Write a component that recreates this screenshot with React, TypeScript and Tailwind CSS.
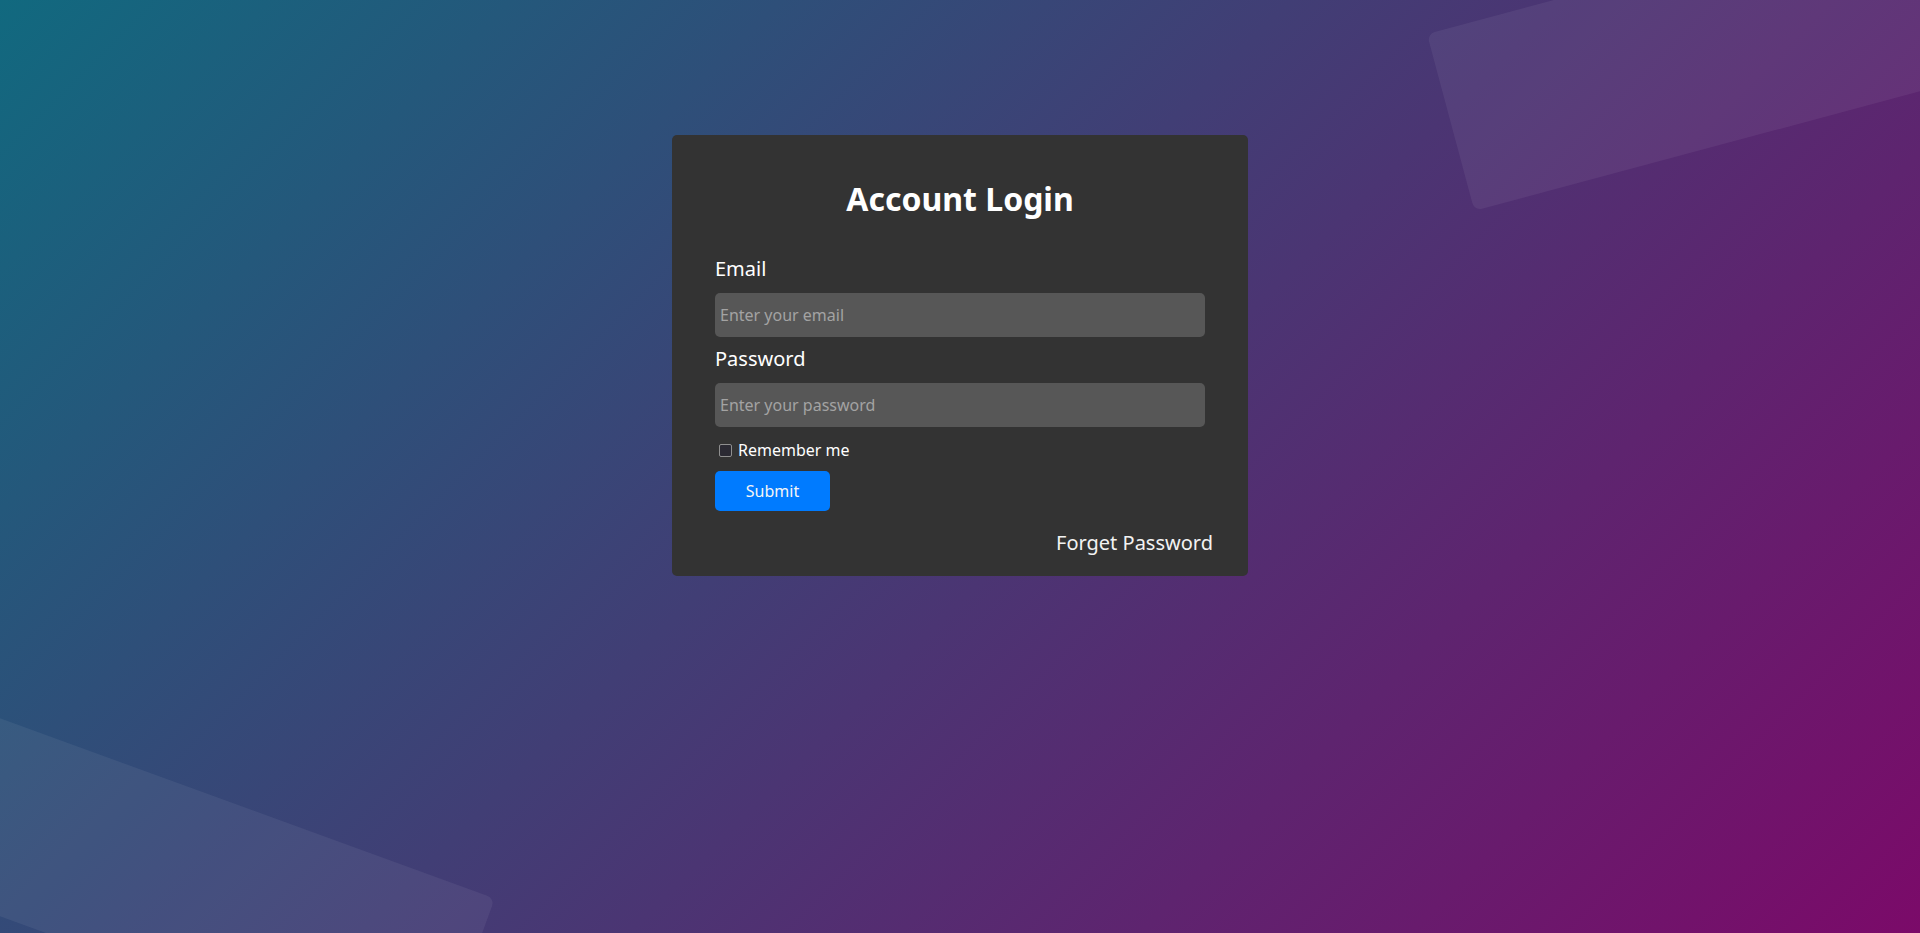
import { useState } from "react";

export default function App() {
  const [remember, setRemember] = useState(false);

  return (
    <div className="relative h-[933px] w-full overflow-hidden bg-[linear-gradient(135deg,#11697f,#7b0a69)] font-['Noto_Sans',sans-serif]">
      {/* decorative tilted panels */}
      <div className="pointer-events-none absolute left-[1427px] top-[34px] h-[183px] w-[700px] origin-top-left -rotate-[15deg] rounded-[8px] bg-white/[0.06]" />
      <div className="pointer-events-none absolute left-[-163px] top-[659px] h-[186px] w-[700px] origin-top-left rotate-[20deg] rounded-[8px] bg-white/[0.06]" />

      <div className="relative mx-auto mt-[135px] w-[576px] rounded-[5px] bg-[#333333] px-[43px] pb-[20px] pt-[42px]">
        <h1 className="text-center text-[32px] font-bold leading-[44px] text-white">
          Account Login
        </h1>

        <form onSubmit={(e) => e.preventDefault()}>
          <label htmlFor="email" className="mb-3 mt-[36px] block text-[20px] leading-6 text-white">
            Email
          </label>
          <input
            id="email"
            type="email"
            placeholder="Enter your email"
            className="block h-[44px] w-full rounded-[5px] bg-[#575757] px-[5px] text-[16px] text-white outline-none placeholder:text-[#a3a3a3]"
          />

          <label htmlFor="password" className="mb-3 mt-[10px] block text-[20px] leading-6 text-white">
            Password
          </label>
          <input
            id="password"
            type="password"
            placeholder="Enter your password"
            className="block h-[44px] w-full rounded-[5px] bg-[#575757] px-[5px] text-[16px] text-white outline-none placeholder:text-[#a3a3a3]"
          />

          <label className="mt-3 flex h-[22px] items-center gap-[6px] text-[16px] leading-[22px] text-white">
            <input
              type="checkbox"
              checked={remember}
              onChange={(e) => setRemember(e.target.checked)}
              className="ml-1 h-[13px] w-[13px] appearance-none rounded-[2px] border border-[#8f8f8f] bg-[#2b2a33] checked:bg-[#007bff]"
            />
            Remember me
          </label>

          <button
            type="submit"
            className="mt-[10px] block h-10 w-[115px] rounded-[5px] bg-[#007bff] text-[16px] text-[#f5f5f5]"
          >
            Submit
          </button>
        </form>

        <div className="-mr-2 mt-[18px] text-right text-[20px] leading-[27px] text-[#f2f2f2]">
          <a href="#">Forget Password</a>
        </div>
      </div>
    </div>
  );
}
